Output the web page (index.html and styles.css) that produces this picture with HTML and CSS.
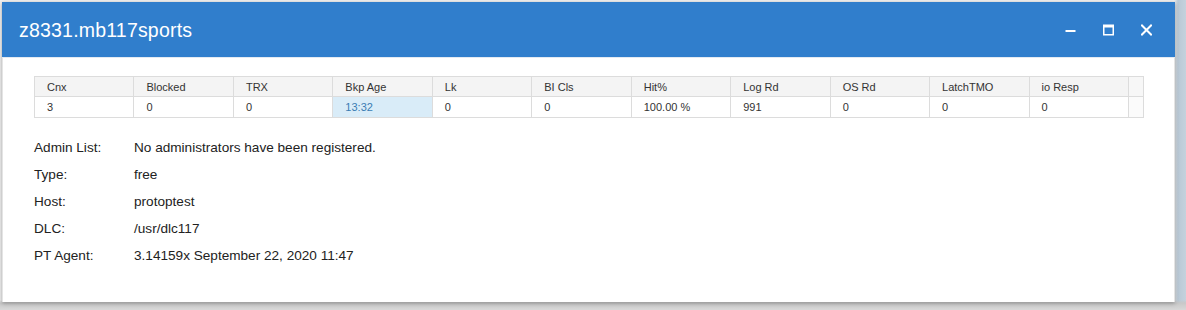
FILE: index.html
```html
<!DOCTYPE html>
<html>
<head>
<meta charset="utf-8">
<link rel="stylesheet" href="styles.css">
</head>
<body>
<div class="stage">
  <div class="dialog">
    <div class="titlebar">
      <div class="title">z8331.mb117sports</div>
      <div class="controls">
        <svg class="ctl" width="11" height="12" viewBox="0 0 11 12"><rect x="0.5" y="6" width="10" height="2" fill="#fff"/></svg>
        <svg class="ctl" width="11" height="12" viewBox="0 0 11 12"><rect x="0.75" y="1.25" width="9.5" height="9.5" fill="none" stroke="#fff" stroke-width="1.5"/><rect x="0.75" y="1" width="9.5" height="2.5" fill="#fff"/></svg>
        <svg class="ctl" width="11" height="12" viewBox="0 0 11 12"><path d="M1 1.5 L10 10.5 M10 1.5 L1 10.5" stroke="#fff" stroke-width="2" stroke-linecap="square"/></svg>
      </div>
    </div>
    <div class="content">
      <table class="grid">
        <thead>
          <tr>
            <th>Cnx</th><th>Blocked</th><th>TRX</th><th>Bkp Age</th><th>Lk</th><th>BI Cls</th><th>Hit%</th><th>Log Rd</th><th>OS Rd</th><th>LatchTMO</th><th>io Resp</th><th class="spacer"></th>
          </tr>
        </thead>
        <tbody>
          <tr>
            <td>3</td><td>0</td><td>0</td><td class="hl">13:32</td><td>0</td><td>0</td><td>100.00 %</td><td>991</td><td>0</td><td>0</td><td>0</td><td class="spacer"></td>
          </tr>
        </tbody>
      </table>
      <div class="info">
        <div class="lbl">Admin List:</div><div class="val">No administrators have been registered.</div>
        <div class="lbl">Type:</div><div class="val">free</div>
        <div class="lbl">Host:</div><div class="val">protoptest</div>
        <div class="lbl">DLC:</div><div class="val">/usr/dlc117</div>
        <div class="lbl">PT Agent:</div><div class="val">3.14159x September 22, 2020 11:47</div>
      </div>
    </div>
  </div>
</div>
</body>
</html>
```

FILE: styles.css
```css
html, body {
  margin: 0;
  padding: 0;
}
body {
  width: 1186px;
  height: 310px;
  overflow: hidden;
  background: linear-gradient(to right, #f2f2f2 0, #f2f2f2 1174px, #b9c9d6 1178px, #c4d2dd 1186px);
  font-family: "Liberation Sans", Arial, sans-serif;
}
.stage {
  padding: 2px 11px 0 2px;
  height: 310px;
  box-sizing: border-box;
  background: linear-gradient(to bottom, transparent 0, transparent 300px, #c8c8c8 303px, #d8d8d8 310px);
}
.dialog {
  width: 1173px;
  height: 300px;
  background: #fff;
  box-shadow: 0 1px 4px rgba(0,0,0,0.35);
  display: flex;
  flex-direction: column;
}
.titlebar {
  height: 55px;
  background: #307ecc;
  display: flex;
  align-items: center;
  justify-content: space-between;
  padding: 0 23px 0 17px;
  border-bottom: 1px solid #e3eaf2;
}
.title {
  color: #fff;
  font-size: 19.5px;
  letter-spacing: 0.2px;
  padding-top: 1px;
}
.controls {
  display: flex;
  gap: 27px;
  align-items: center;
}
.ctl {
  display: block;
}
.content {
  padding: 18px 31px 0 31px;
  border-left: 1px solid #e4e4e4;
  border-right: 1px solid #e4e4e4;
  flex: 1;
}
.grid {
  border-collapse: collapse;
  width: 1110px;
  table-layout: fixed;
  font-size: 11px;
  color: #333;
}
.grid th, .grid td {
  border: 1px solid #dcdcdc;
  text-align: left;
  font-weight: normal;
  padding: 0 0 0 12px;
  white-space: nowrap;
}
.grid th {
  background: #f4f4f4;
  height: 19px;
}
.grid td {
  height: 20px;
  background: #fff;
}
.grid .spacer {
  width: 14px;
  padding: 0;
  background: #f7f7f7;
}
.grid td.spacer {
  background: #fbfbfb;
}
.grid td.hl {
  background: #d9ecf8;
  color: #3b7cb3;
}
.info {
  display: grid;
  grid-template-columns: 100px 1fr;
  row-gap: 0;
  margin-top: 21px;
  font-size: 13.6px;
  color: #222;
}
.lbl, .val {
  height: 27px;
  line-height: 18px;
}
```
